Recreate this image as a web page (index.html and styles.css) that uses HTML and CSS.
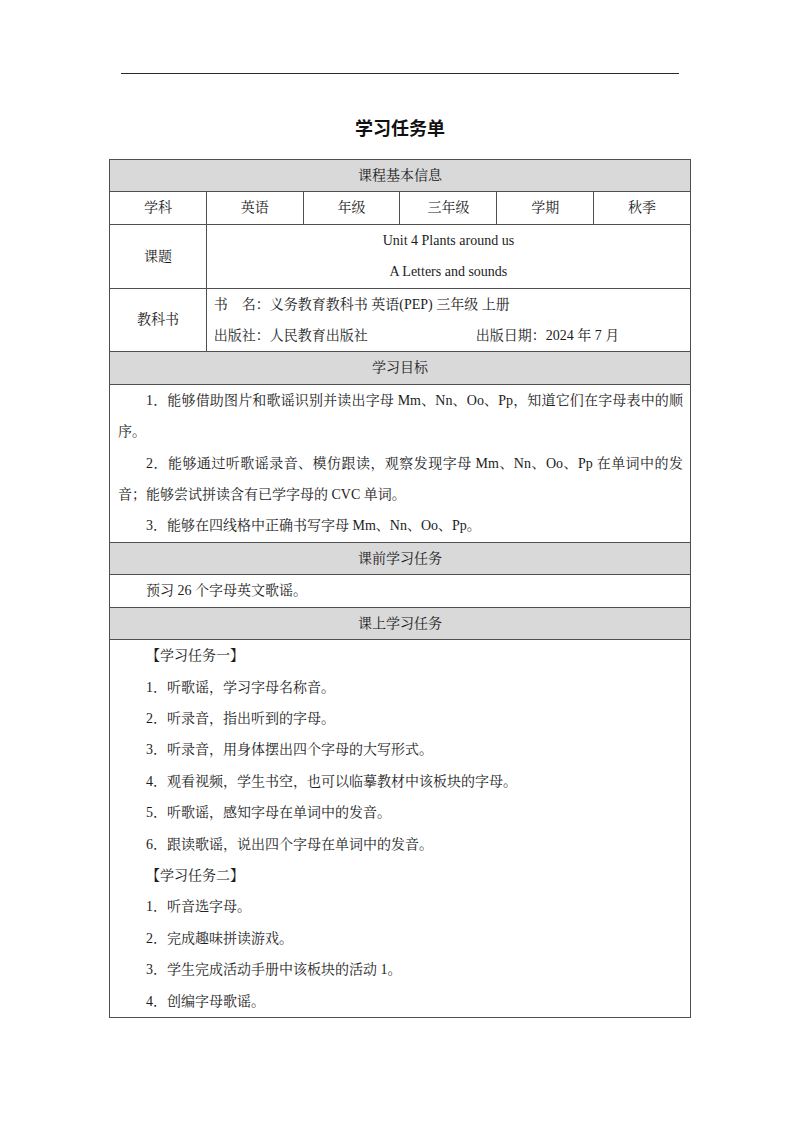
FILE: index.html
```html
<!DOCTYPE html>
<html lang="zh-CN">
<head>
<meta charset="utf-8">
<title>学习任务单</title>
<link rel="stylesheet" href="styles.css">
</head>
<body>
<div class="page">
  <div class="rule"></div>
  <h1 class="title">学习任务单</h1>
  <table class="sheet">
    <colgroup>
      <col><col><col><col><col><col>
    </colgroup>
    <tr><td class="head" colspan="6">课程基本信息</td></tr>
    <tr>
      <td class="c">学科</td><td class="c">英语</td><td class="c">年级</td>
      <td class="c">三年级</td><td class="c">学期</td><td class="c">秋季</td>
    </tr>
    <tr>
      <td class="c">课题</td>
      <td class="c" colspan="5">Unit 4 Plants around us<br>A Letters and sounds</td>
    </tr>
    <tr>
      <td class="c">教科书</td>
      <td class="l" colspan="5">书　名：义务教育教科书 英语(PEP) 三年级 上册<br><span class="pub">出版社：人民教育出版社</span>出版日期：2024 年 7 月</td>
    </tr>
    <tr><td class="head" colspan="6">学习目标</td></tr>
    <tr>
      <td class="body" colspan="6">
        <p>1．能够借助图片和歌谣识别并读出字母 Mm、Nn、Oo、Pp，知道它们在字母表中的顺序。</p>
        <p>2．能够通过听歌谣录音、模仿跟读，观察发现字母 Mm、Nn、Oo、Pp 在单词中的发音；能够尝试拼读含有已学字母的 CVC 单词。</p>
        <p>3．能够在四线格中正确书写字母 Mm、Nn、Oo、Pp。</p>
      </td>
    </tr>
    <tr><td class="head" colspan="6">课前学习任务</td></tr>
    <tr>
      <td class="body" colspan="6"><p>预习 26 个字母英文歌谣。</p></td>
    </tr>
    <tr><td class="head" colspan="6">课上学习任务</td></tr>
    <tr>
      <td class="body" colspan="6">
        <p>【学习任务一】</p>
        <p>1．听歌谣，学习字母名称音。</p>
        <p>2．听录音，指出听到的字母。</p>
        <p>3．听录音，用身体摆出四个字母的大写形式。</p>
        <p>4．观看视频，学生书空，也可以临摹教材中该板块的字母。</p>
        <p>5．听歌谣，感知字母在单词中的发音。</p>
        <p>6．跟读歌谣，说出四个字母在单词中的发音。</p>
        <p>【学习任务二】</p>
        <p>1．听音选字母。</p>
        <p>2．完成趣味拼读游戏。</p>
        <p>3．学生完成活动手册中该板块的活动 1。</p>
        <p>4．创编字母歌谣。</p>
      </td>
    </tr>
  </table>
</div>
</body>
</html>
```

FILE: styles.css
```css
* { box-sizing: border-box; }
html, body {
  margin: 0;
  padding: 0;
  background: #ffffff;
}
body {
  font-family: "Liberation Serif", "Noto Serif CJK SC", "Noto Sans CJK SC", serif;
  color: #1c1c1c;
}
.page {
  width: 800px;
  padding-top: 73px;
}
.rule {
  width: 558px;
  margin: 0 auto 0 121px;
  border-top: 1.5px solid #2a2a2a;
}
.title {
  margin: 40px 0 0;
  text-align: center;
  font-family: "Noto Sans CJK SC", sans-serif;
  font-weight: 700;
  font-size: 18px;
  line-height: 26px;
  color: #111;
}
.sheet {
  margin: 19px 0 0 109px;
  width: 582px;
  border-collapse: collapse;
  table-layout: fixed;
  font-size: 14px;
  line-height: 31.4px;
}
.sheet td {
  border: 1px solid #505050;
  padding: 0;
  vertical-align: middle;
}
.sheet .head {
  background: #d9d9d9;
  text-align: center;
}
.sheet .c {
  text-align: center;
}
.sheet .l {
  text-align: left;
  padding-left: 7px;
}
.pub {
  display: inline-block;
  width: 262px;
}
.sheet .body {
  padding: 0 7px 0 8px;
}
.sheet .body p {
  margin: 0;
  text-indent: 2em;
  text-align: justify;
}
```
